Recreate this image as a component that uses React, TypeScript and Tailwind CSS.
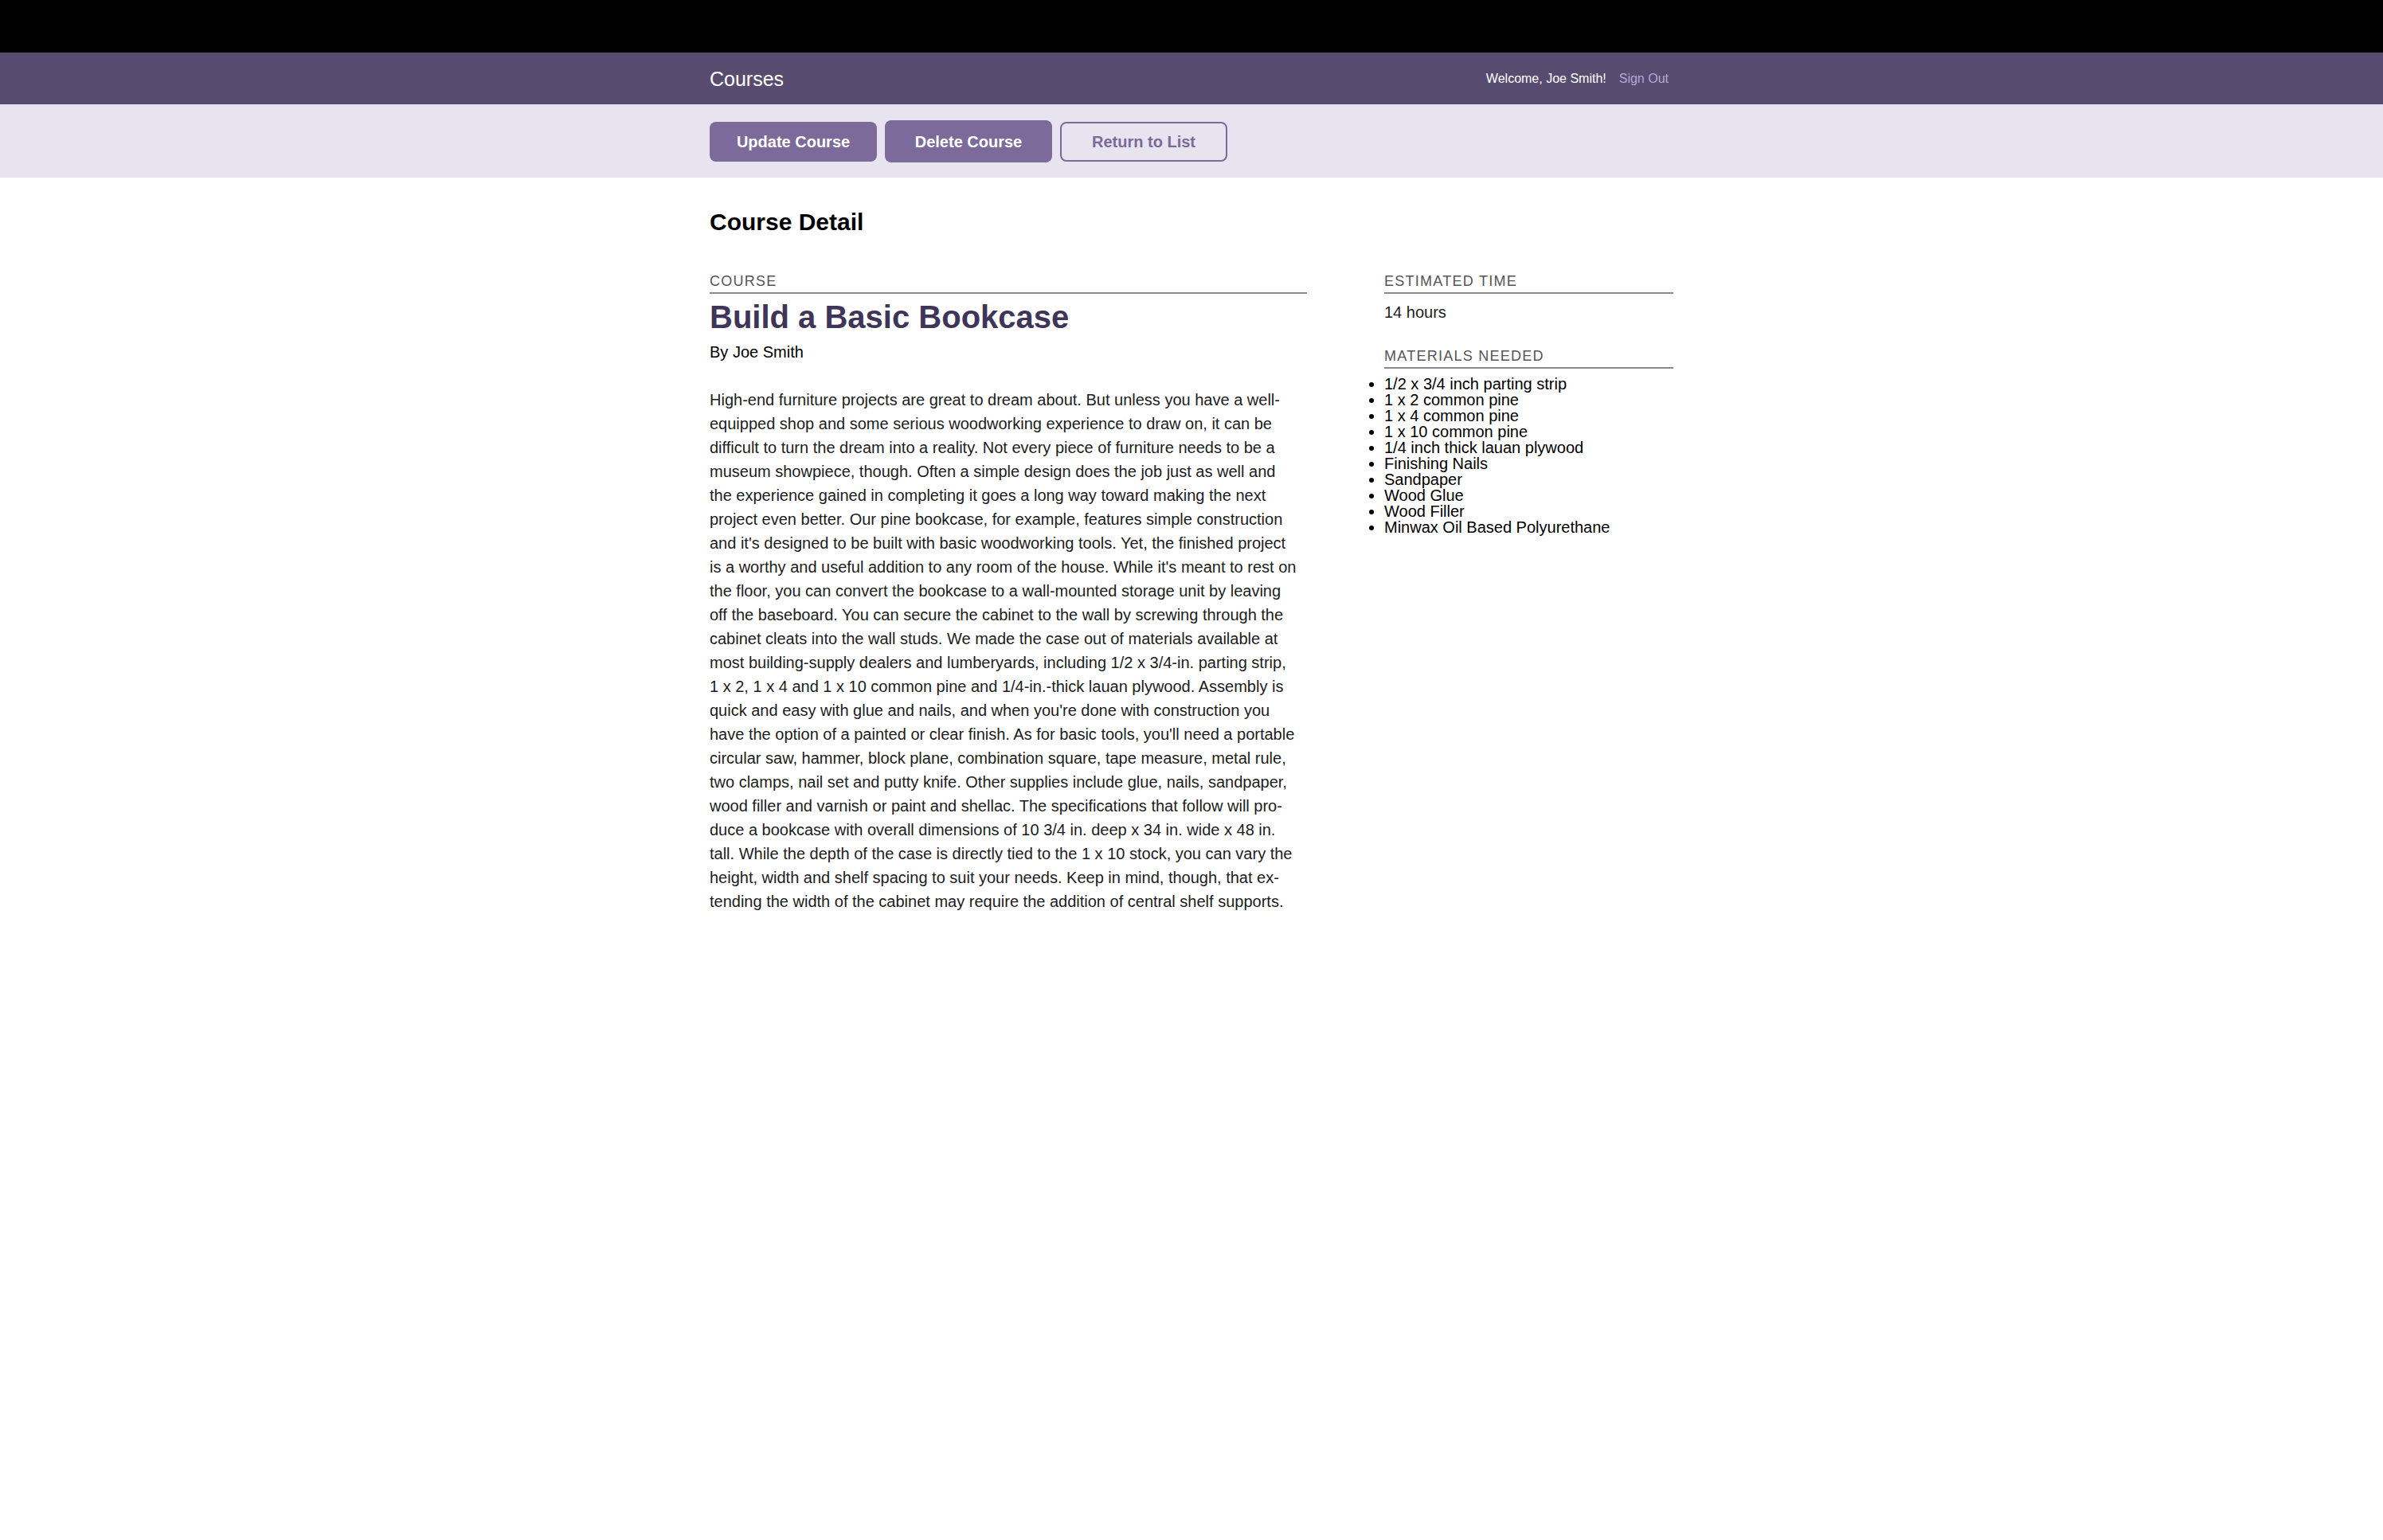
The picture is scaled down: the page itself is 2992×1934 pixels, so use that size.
import React from 'react';

const paragraphLines = [
  'High-end furniture projects are great to dream about. But unless you have a well-',
  'equipped shop and some serious woodworking experience to draw on, it can be',
  'difficult to turn the dream into a reality. Not every piece of furniture needs to be a',
  'museum showpiece, though. Often a simple design does the job just as well and',
  'the experience gained in completing it goes a long way toward making the next',
  'project even better. Our pine bookcase, for example, features simple construction',
  "and it's designed to be built with basic woodworking tools. Yet, the finished project",
  "is a worthy and useful addition to any room of the house. While it's meant to rest on",
  'the floor, you can convert the bookcase to a wall-mounted storage unit by leaving',
  'off the baseboard. You can secure the cabinet to the wall by screwing through the',
  'cabinet cleats into the wall studs. We made the case out of materials available at',
  'most building-supply dealers and lumberyards, including 1/2 x 3/4-in. parting strip,',
  '1 x 2, 1 x 4 and 1 x 10 common pine and 1/4-in.-thick lauan plywood. Assembly is',
  "quick and easy with glue and nails, and when you're done with construction you",
  "have the option of a painted or clear finish. As for basic tools, you'll need a portable",
  'circular saw, hammer, block plane, combination square, tape measure, metal rule,',
  'two clamps, nail set and putty knife. Other supplies include glue, nails, sandpaper,',
  'wood filler and varnish or paint and shellac. The specifications that follow will pro-',
  'duce a bookcase with overall dimensions of 10 3/4 in. deep x 34 in. wide x 48 in.',
  'tall. While the depth of the case is directly tied to the 1 x 10 stock, you can vary the',
  'height, width and shelf spacing to suit your needs. Keep in mind, though, that ex-',
  'tending the width of the cabinet may require the addition of central shelf supports.',
];

const materials = [
  '1/2 x 3/4 inch parting strip',
  '1 x 2 common pine',
  '1 x 4 common pine',
  '1 x 10 common pine',
  '1/4 inch thick lauan plywood',
  'Finishing Nails',
  'Sandpaper',
  'Wood Glue',
  'Wood Filler',
  'Minwax Oil Based Polyurethane',
];

const SectionLabel: React.FC<{ children: React.ReactNode }> = ({ children }) => (
  <h3 className="text-[18px] leading-[22px] tracking-[0.07em] text-[#555] pb-[3px] border-b-2 border-[#8a8a8a] font-normal">
    {children}
  </h3>
);

const App: React.FC = () => {
  return (
    <div className="min-h-screen bg-white font-['Liberation_Sans',Arial,sans-serif] text-black">
      <div className="h-[66px] bg-black" />

      <header className="h-[65px] bg-[#574c6f]">
        <div className="w-[1210px] mx-auto h-full flex items-center justify-between">
          <span className="text-[25px] leading-[30px] text-white">Courses</span>
          <nav className="flex items-center gap-4 text-[16px] leading-[20px] pr-[6px]">
            <span className="text-white">Welcome, Joe Smith!</span>
            <a href="#" className="text-[#b7a6da]">Sign Out</a>
          </nav>
        </div>
      </header>

      <div className="h-[92px] bg-[#e7e4ef]">
        <div className="w-[1210px] mx-auto pt-[20px] flex items-center gap-[10px] h-[73px]">
          <button className="w-[210px] h-[50px] rounded-[8px] bg-[#7b6a9a] text-white text-[20px] font-bold">
            Update Course
          </button>
          <button className="w-[210px] h-[53px] rounded-[8px] bg-[#7b6a9a] text-white text-[20px] font-bold">
            Delete Course
          </button>
          <button className="w-[210px] h-[50px] rounded-[8px] border-2 border-[#7b6a9a] bg-[#e7e4ef] text-[#7b6a9a] text-[20px] font-bold">
            Return to List
          </button>
        </div>
      </div>

      <main className="w-[1210px] mx-auto pt-[38px] pb-20">
        <h2 className="text-[30px] leading-[36px] font-bold">Course Detail</h2>

        <div className="mt-[45px] flex justify-between">
          <div className="w-[750px]">
            <SectionLabel>COURSE</SectionLabel>
            <h4 className="mt-[7px] text-[40px] leading-[44px] font-bold text-[#3e3558]">
              Build a Basic Bookcase
            </h4>
            <p className="mt-[10px] text-[20px] leading-[24px]">By Joe Smith</p>
            <div className="mt-[33px] text-[20px] leading-[30px] text-[#1c1c1c]">
              {paragraphLines.map((line) => (
                <p key={line} className="whitespace-nowrap">{line}</p>
              ))}
            </div>
          </div>

          <div className="w-[363px]">
            <SectionLabel>ESTIMATED TIME</SectionLabel>
            <p className="mt-[11px] text-[20px] leading-[24px] text-[#1c1c1c]">14 hours</p>

            <div className="mt-[32px]">
              <SectionLabel>MATERIALS NEEDED</SectionLabel>
            </div>
            <ul className="mt-[9px] list-disc list-outside text-[20px] leading-[20px]">
              {materials.map((m) => (
                <li key={m}>{m}</li>
              ))}
            </ul>
          </div>
        </div>
      </main>
    </div>
  );
};

export default App;
